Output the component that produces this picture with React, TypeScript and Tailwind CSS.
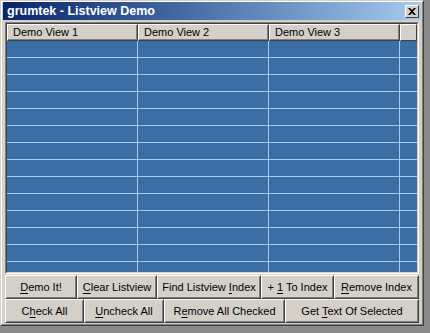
import React from "react";

const font = { fontFamily: '"Liberation Sans", Arial, sans-serif' };

function U({ children }: { children: React.ReactNode }) {
  return <span className="underline underline-offset-2">{children}</span>;
}

function Btn({ w, children }: { w: string; children: React.ReactNode }) {
  return (
    <div className={`${w} h-full border border-t-white border-l-white border-r-[#404040] border-b-[#404040]`}>
      <div className="h-full flex items-center justify-center border border-t-[#d4d0c8] border-l-[#d4d0c8] border-r-[#808080] border-b-[#808080] text-[11px] text-black whitespace-pre">
        <span>{children}</span>
      </div>
    </div>
  );
}

function HeaderCell({ w, label }: { w: string; label: string }) {
  return (
    <div className={`${w} h-full shrink-0 border border-t-white border-l-white border-r-[#404040] border-b-[#404040]`}>
      <div className="h-full flex items-center pl-[5px] border-r border-b border-r-[#808080] border-b-[#808080] text-[11px] text-black whitespace-nowrap">
        {label}
      </div>
    </div>
  );
}

export default function App() {
  const rows = Array.from({ length: 14 });
  return (
    <div className="w-[430px] h-[333px] bg-[#8a8a8a] overflow-hidden" style={font}>
      <div className="w-[424px] h-[326px] bg-[#d4d0c8] border border-t-[#d4d0c8] border-l-[#d4d0c8] border-r-[#404040] border-b-[#404040]">
        <div className="h-full border border-t-white border-l-white border-r-[#808080] border-b-[#808080] px-[1px] pt-0 flex flex-col">
          {/* title bar */}
          <div className="h-[18px] mt-0 flex items-center justify-between bg-gradient-to-r from-[#0a246a] to-[#a6caf0] pl-[4px] pr-[2px]">
            <span className="text-white font-bold text-[12.5px] leading-none">grumtek - Listview Demo</span>
            <div className="w-[14px] h-[13px] bg-[#d4d0c8] border border-t-white border-l-white border-r-[#404040] border-b-[#404040] flex items-center justify-center">
              <svg width="8" height="7" viewBox="0 0 8 7">
                <path d="M0 0 L2 0 L4 2 L6 0 L8 0 L5 3.5 L8 7 L6 7 L4 5 L2 7 L0 7 L3 3.5 Z" fill="#000" />
              </svg>
            </div>
          </div>
          {/* listview */}
          <div className="mt-[2px] mx-[2px] h-[252px] border border-t-[#808080] border-l-[#808080] border-r-white border-b-white">
            <div className="h-full border border-t-[#404040] border-l-[#404040] border-r-[#d4d0c8] border-b-[#d4d0c8] flex flex-col bg-[#3a6ea5] overflow-hidden">
              <div className="h-[17px] shrink-0 flex bg-[#d4d0c8]">
                <HeaderCell w="w-[131px]" label="Demo View 1" />
                <HeaderCell w="w-[131px]" label="Demo View 2" />
                <HeaderCell w="w-[131px]" label="Demo View 3" />
                <div className="flex-1 h-full border border-t-white border-l-white border-r-[#404040] border-b-[#404040]" />
              </div>
              <div className="flex-1 overflow-hidden">
                {rows.map((_, i) => (
                  <div key={i} className="h-[17px] flex border-b border-b-[#a6caf0]">
                    <div className="w-[131px] shrink-0 border-r border-r-[#a6caf0]" />
                    <div className="w-[131px] shrink-0 border-r border-r-[#a6caf0]" />
                    <div className="w-[131px] shrink-0 border-r border-r-[#a6caf0]" />
                    <div className="flex-1" />
                  </div>
                ))}
              </div>
            </div>
          </div>
          {/* buttons */}
          <div className="mx-[2px] mt-[1px] flex h-[24px]">
            <Btn w="w-[72px]"><U>D</U>emo It!</Btn>
            <Btn w="w-[80px]"><U>C</U>lear Listview</Btn>
            <Btn w="w-[104px]">Find Listview <U>I</U>ndex</Btn>
            <Btn w="w-[73px]">+ <U>1</U> To Index</Btn>
            <Btn w="flex-1"><U>R</U>emove Index</Btn>
          </div>
          <div className="mx-[2px] flex h-[24px]">
            <Btn w="w-[79px]">C<U>h</U>eck All</Btn>
            <Btn w="w-[80px]"><U>U</U>ncheck All</Btn>
            <Btn w="w-[121px]">R<U>e</U>move All Checked</Btn>
            <Btn w="flex-1">Get <U>T</U>ext Of Selected</Btn>
          </div>
        </div>
      </div>
    </div>
  );
}
